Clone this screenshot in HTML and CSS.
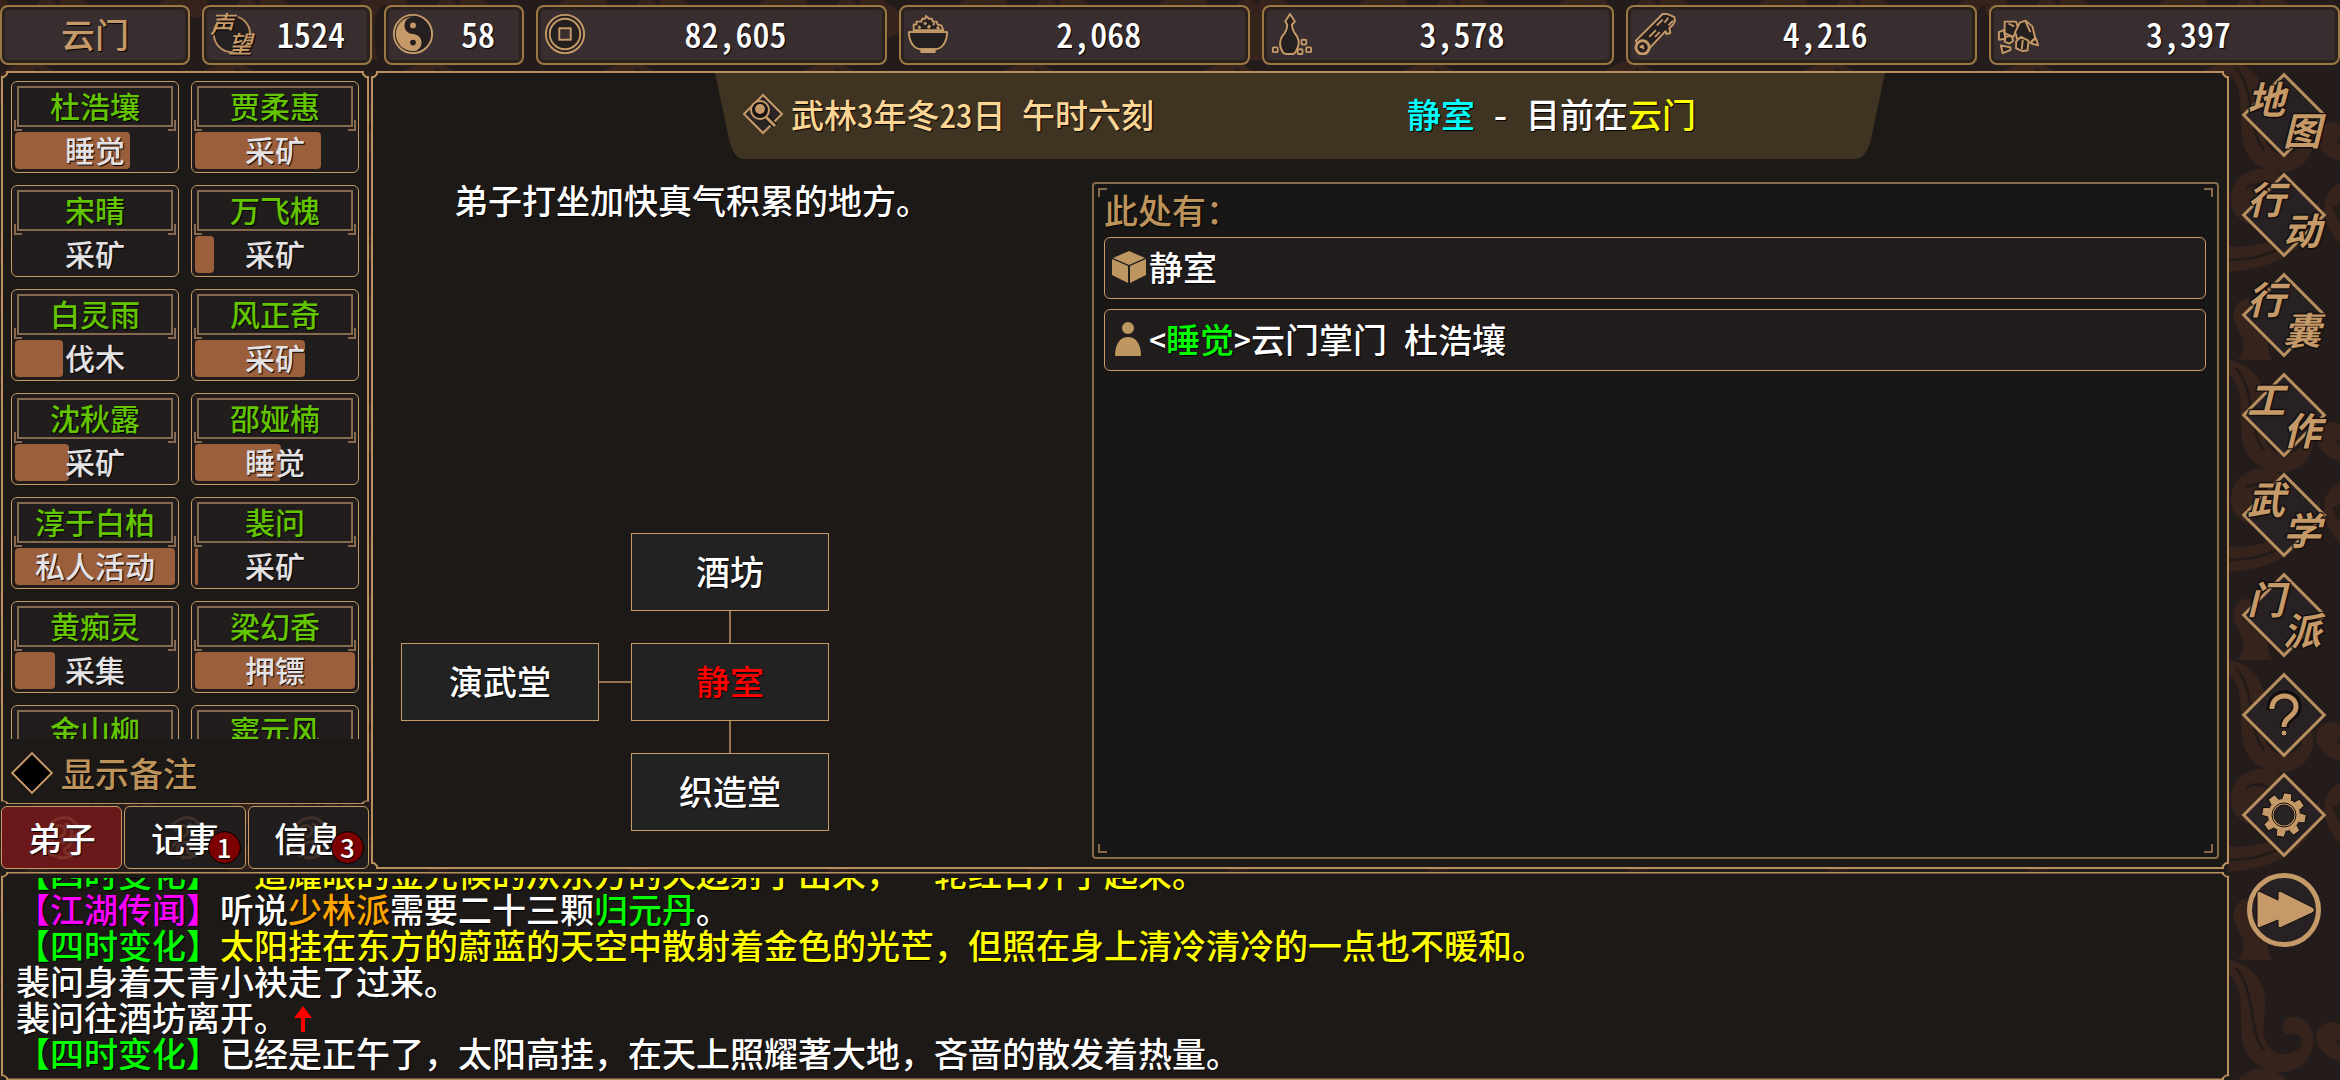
FILE: index.html
```
<!DOCTYPE html>
<html lang="zh-CN">
<head>
    <meta charset="UTF-8">
    <meta name="viewport" content="width=device-width, initial-scale=1.0">
    <title>云门</title>
    <link rel="stylesheet" href="styles.css">
</head>
<body>
    <svg class="backdrop" aria-hidden="true">
        <defs>
            <pattern id="clouds" width="200" height="300" patternUnits="userSpaceOnUse" patternTransform="translate(28 60)">
                <g fill="#35231c">
                    <path d="M0 0C28 4 42 28 36 58C32 84 44 100 66 92C78 88 76 72 64 74C54 76 50 64 60 58C78 52 92 74 82 94C70 122 20 118 14 78C12 50 16 24 0 14Z"/>
                    <path d="M20 112C36 104 58 112 62 128C78 132 84 150 70 162C52 176 18 170 6 152C-2 138 6 118 20 112Z"/>
                    <path d="M0 186C34 190 66 176 92 140C92 178 60 208 0 212Z"/>
                    <path d="M100 96C84 86 84 64 104 62C118 62 120 80 108 80C112 90 128 82 134 62C150 20 176 10 200 0V30C176 36 160 50 152 74C144 102 118 108 100 96Z"/>
                    <path d="M104 128C118 116 138 128 130 144C124 154 110 148 114 140C104 146 108 162 124 170C150 184 180 176 200 160V196C164 212 118 200 102 170C94 154 94 138 104 128Z"/>
                    <path d="M6 262C2 240 22 232 30 246C44 216 46 232 60 244C78 252 80 274 60 278C44 280 42 262 54 260C42 254 34 280 44 300H10C20 286 14 274 6 262Z"/>
                    <path d="M120 300C116 260 130 232 160 228C182 228 186 254 168 258C156 258 154 246 162 244C142 244 144 276 150 300Z"/>
                </g>
                <g fill="none" stroke="#241b19" stroke-width="3">
                    <path d="M8 8C28 30 20 72 36 90"/>
                    <path d="M0 200C34 200 60 188 78 168"/>
                    <path d="M18 128Q34 118 48 136Q64 138 66 150"/>
                    <path d="M196 14C160 26 146 50 140 74"/>
                    <path d="M106 146C112 176 150 194 196 178"/>
                </g>
            </pattern>
        </defs>
        <rect width="100%" height="100%" fill="url(#clouds)"/>
    </svg>

    <header class="topbar">
        <button class="stat stat-sect">云门</button>
        <div class="stat stat-fame">
            <span class="stat-icon fame-icon">
                <svg class="fame-ring" viewBox="0 0 44 44"><circle cx="23" cy="22" r="19" fill="#251f20" stroke="#b98f5e" stroke-width="2"/></svg>
                <span>声</span><span>望</span>
            </span>
            <span class="number">1524</span>
        </div>
        <div class="stat stat-qi">
            <svg class="stat-icon" viewBox="0 0 44 44">
                <circle cx="22" cy="22" r="20" fill="#251f20" stroke="#c69a68" stroke-width="2"/>
                <path d="M22 4A18 18 0 0 0 22 40A9 9 0 0 0 22 22A9 9 0 0 1 22 4Z" fill="#c69a68"/>
                <circle cx="22" cy="13" r="3" fill="#c69a68"/>
                <circle cx="22" cy="31" r="3" fill="#251f20"/>
            </svg>
            <span class="number">58</span>
        </div>
        <div class="stat">
            <svg class="stat-icon" viewBox="0 0 44 44" fill="none" stroke="#c69a68" stroke-width="2">
                <circle cx="22" cy="22" r="20" fill="#251f20"/>
                <circle cx="22" cy="22" r="16"/>
                <rect x="16" y="16" width="12" height="12" fill="#382d2f"/>
            </svg>
            <span class="number">82,605</span>
        </div>
        <div class="stat">
            <svg class="stat-icon" viewBox="0 0 44 44" fill="#251f20" stroke="#c69a68" stroke-width="2" stroke-linejoin="round">
                <path d="M7 18V12L10 12L10 9L15 9L16 6L19 6L20 3L23 6L26 6L27 9L31 9L32 12L36 13L38 18Z"/>
                <path d="M12 16L14 14M18 10L20 12M22 16L24 13M27 11L29 12M31 16L34 15" stroke-width="3"/>
                <path d="M2 20H42C42 30 37 38 29 38H15C7 38 2 30 2 20Z"/>
                <path d="M2 20H42M15 38H29V41H15Z" fill="#c69a68"/>
            </svg>
            <span class="number">2,068</span>
        </div>
        <div class="stat">
            <svg class="stat-icon" viewBox="0 0 44 44" fill="#251f20" stroke="#c69a68" stroke-width="2" stroke-linejoin="round">
                <path d="M21 1L26 9L23 12C23 18 25 20 28 24C32 30 30 36 26 42L24 43H17L14 42C10 36 9 30 13 24C17 20 18 17 18 12L16 9Z"/>
                <rect x="3" y="36" width="5" height="5" rx="1"/>
                <rect x="33" y="28" width="5" height="5" rx="1"/>
                <rect x="29" y="38" width="5" height="5" rx="1"/>
                <rect x="38" y="36" width="5" height="5" rx="1"/>
            </svg>
            <span class="number">3,578</span>
        </div>
        <div class="stat">
            <svg class="stat-icon" viewBox="0 0 44 44" fill="#251f20" stroke="#c69a68" stroke-width="2" stroke-linejoin="round">
                <path d="M2 29L30 1L34 1L37 2L42 4L43 8L41 12L37 16L38 21L34 22L33 19L17 36L10 43Z"/>
                <path d="M36 5L32 10M41 8L36 13M23 18L16 25M27 20L22 25M30 7L24 13"/>
                <circle cx="9" cy="36" r="7" stroke-width="3"/>
                <path d="M6 36L9 34L10 38"/>
            </svg>
            <span class="number">4,216</span>
        </div>
        <div class="stat">
            <svg class="stat-icon" viewBox="0 0 44 44" fill="#251f20" stroke="#c69a68" stroke-width="2" stroke-linejoin="round">
                <path d="M8 9L20 9L22 15L17 25L8 21Z"/>
                <path d="M19 20L24 10L30 8L37 14L40 26L35 31L22 30Z"/>
                <path d="M2 20L7 18L9 27L2 28Z"/>
                <path d="M9 25L15 24L17 29L13 32L8 30Z"/>
                <path d="M20 30L25 25L33 29L32 39L27 40L20 37Z"/>
                <path d="M37 29L41 27L43 34L36 32Z"/>
                <path d="M4 34L14 36L14 39L6 42Z"/>
                <path d="M30 9L35 20M27 28L26 38M12 11L18 14" fill="none"/>
            </svg>
            <span class="number">3,397</span>
        </div>
    </header>

    <div class="content">
        <div class="stage">
            <div class="upper">
                <aside class="sidebar">
                    <section class="frame roster">
                        <div class="disciples">
                            <button class="card"><span class="name">杜浩壤</span><span class="status"><i class="bar" style="width: 72%"></i><b>睡觉</b></span></button>
                            <button class="card"><span class="name">贾柔惠</span><span class="status"><i class="bar" style="width: 79%"></i><b>采矿</b></span></button>
                            <button class="card"><span class="name">宋晴</span><span class="status"><b>采矿</b></span></button>
                            <button class="card"><span class="name">万飞槐</span><span class="status"><i class="bar" style="width: 12%"></i><b>采矿</b></span></button>
                            <button class="card"><span class="name">白灵雨</span><span class="status"><i class="bar" style="width: 30%"></i><b>伐木</b></span></button>
                            <button class="card"><span class="name">风正奇</span><span class="status"><i class="bar" style="width: 69%"></i><b>采矿</b></span></button>
                            <button class="card"><span class="name">沈秋露</span><span class="status"><i class="bar" style="width: 34%"></i><b>采矿</b></span></button>
                            <button class="card"><span class="name">邵娅楠</span><span class="status"><i class="bar" style="width: 54%"></i><b>睡觉</b></span></button>
                            <button class="card"><span class="name">淳于白柏</span><span class="status"><i class="bar" style="width: 100%"></i><b>私人活动</b></span></button>
                            <button class="card"><span class="name">裴问</span><span class="status"><i class="bar" style="width: 2%"></i><b>采矿</b></span></button>
                            <button class="card"><span class="name">黄痴灵</span><span class="status"><i class="bar" style="width: 25%"></i><b>采集</b></span></button>
                            <button class="card"><span class="name">梁幻香</span><span class="status"><i class="bar" style="width: 100%"></i><b>押镖</b></span></button>
                            <button class="card"><span class="name">金山柳</span><span class="status"></span></button>
                            <button class="card"><span class="name">窦元风</span><span class="status"></span></button>
                        </div>
                        <label class="note-toggle" for="showNotes">
                            <input type="checkbox" id="showNotes">
                            显示备注
                        </label>
                    </section>
                    <nav class="tabs">
                        <button class="tab active"><svg class="emblem" viewBox="0 0 44 44"><use href="#emblem"/></svg><span>弟子</span></button>
                        <button class="tab"><svg class="emblem" viewBox="0 0 44 44"><use href="#emblem"/></svg><span>记事</span><span class="badge">1</span></button>
                        <button class="tab"><svg class="emblem" viewBox="0 0 44 44"><use href="#emblem"/></svg><span>信息</span><span class="badge">3</span></button>
                    </nav>
                </aside>

                <main class="frame scene">
                    <div class="ribbon">
                        <svg class="ribbon-shape" viewBox="0 0 1170 86" preserveAspectRatio="none"><path d="M0 0H1170L1156 66Q1151 86 1140 86H28Q19 86 14 66Z" fill="#3f3322"/></svg>
                        <div class="date">
                            <svg class="lens" viewBox="0 0 42 42" fill="none" stroke="#c69a68" stroke-width="2">
                                <path d="M21 2L40 21L21 40L2 21Z" fill="#2a2425"/>
                                <path d="M23 23L33 33" stroke="#181414" stroke-width="6"/>
                                <path d="M24 24L33 33" stroke-width="3"/>
                                <circle cx="18" cy="17" r="9" fill="#181414"/>
                                <circle cx="18" cy="16" r="4" fill="#c69a68"/>
                            </svg>
                            <span class="number">武林3年冬23日 午时六刻</span>
                        </div>
                        <div class="place number"><span class="cyan">静室</span> - 目前在<span class="yellow">云门</span></div>
                    </div>

                    <div class="scene-body">
                        <div class="room">
                            <p class="description">弟子打坐加快真气积累的地方。</p>
                            <div class="map">
                                <button class="node north">酒坊</button>
                                <i class="link-v link-top"></i>
                                <button class="node west">演武堂</button>
                                <i class="link-h"></i>
                                <button class="node here">静室</button>
                                <i class="link-v link-bottom"></i>
                                <button class="node south">织造堂</button>
                            </div>
                        </div>

                        <section class="present">
                            <i class="corner tl"></i><i class="corner tr"></i><i class="corner bl"></i><i class="corner br"></i>
                            <h2>此处有：</h2>
                            <button class="entry">
                                <svg class="entry-icon" viewBox="0 0 34 34" fill="#bd975f"><path d="M17 1L33 8L17 15L1 8Z"/><path d="M0 9L16 16V33L0 25Z"/><path d="M34 9L18 16V33L34 25Z"/></svg>
                                <span>静室</span>
                            </button>
                            <button class="entry">
                                <svg class="entry-icon" viewBox="0 0 34 34" fill="#bd975f"><circle cx="16" cy="6" r="6"/><path d="M3 34C3 22 8 15 16 15S29 22 29 34Z"/></svg>
                                <span class="number">&lt;<span class="green">睡觉</span>&gt;云门掌门 杜浩壤</span>
                            </button>
                        </section>
                    </div>
                </main>
            </div>

            <section class="frame log">
                <div class="log-lines">
                    <p class="yellow"><span class="green">【四时变化】</span>一道耀眼的金光倏的从东方的天边射了出来，一轮红日升了起来。</p>
                    <p><span class="magenta">【江湖传闻】</span>听说<span class="orange">少林派</span>需要二十三颗<span class="green">归元丹</span>。</p>
                    <p class="yellow"><span class="green">【四时变化】</span>太阳挂在东方的蔚蓝的天空中散射着金色的光芒，但照在身上清冷清冷的一点也不暖和。</p>
                    <p>裴问身着天青小袂走了过来。</p>
                    <p>裴问往酒坊离开。<svg class="arrow" viewBox="0 0 30 30"><path d="M15 2L24 14H17V28H13V14H6Z" fill="#f00"/></svg></p>
                    <p><span class="green">【四时变化】</span>已经是正午了，太阳高挂，在天上照耀著大地，吝啬的散发着热量。</p>
                </div>
            </section>
        </div>

        <nav class="menu">
            <button class="menu-item"><span>地</span><span>图</span></button>
            <button class="menu-item"><span>行</span><span>动</span></button>
            <button class="menu-item"><span>行</span><span>囊</span></button>
            <button class="menu-item"><span>工</span><span>作</span></button>
            <button class="menu-item"><span>武</span><span>学</span></button>
            <button class="menu-item"><span>门</span><span>派</span></button>
            <button class="menu-item icon-only" aria-label="帮助">
                <svg viewBox="0 0 84 84" fill="none" stroke-linecap="butt">
                    <path d="M29 37C29 17 55 17 55 34C55 45 42 43 42 55" stroke="#110d0c" stroke-width="9"/>
                    <path d="M30 36C30 19 54 19 54 34C54 44 42 43 42 54" stroke="#c69a68" stroke-width="5"/>
                    <circle cx="42" cy="60" r="3" fill="#c69a68" stroke="#110d0c"/>
                </svg>
            </button>
            <button class="menu-item icon-only" aria-label="设置">
                <svg viewBox="0 0 84 84">
                    <g fill="#c69a68" stroke="#110d0c" stroke-width="1" transform="rotate(10 42 42)">
                        <path d="M37 27L38 20H46L47 27Z"/>
                        <path d="M37 27L38 20H46L47 27Z" transform="rotate(45 42 42)"/>
                        <path d="M37 27L38 20H46L47 27Z" transform="rotate(90 42 42)"/>
                        <path d="M37 27L38 20H46L47 27Z" transform="rotate(135 42 42)"/>
                        <path d="M37 27L38 20H46L47 27Z" transform="rotate(180 42 42)"/>
                        <path d="M37 27L38 20H46L47 27Z" transform="rotate(225 42 42)"/>
                        <path d="M37 27L38 20H46L47 27Z" transform="rotate(270 42 42)"/>
                        <path d="M37 27L38 20H46L47 27Z" transform="rotate(315 42 42)"/>
                    </g>
                    <circle cx="42" cy="42" r="16" fill="#c69a68"/>
                    <circle cx="42" cy="42" r="12" fill="#c69a68" stroke="#110d0c"/>
                    <circle cx="42" cy="42" r="10" fill="#282223" stroke="#110d0c"/>
                </svg>
            </button>
            <button class="speed" aria-label="快进">
                <svg viewBox="8 5 64 64"><path d="M13 21Q13 17 17 19L34 27V21Q34 17 38 19L68 34Q73 37 68 40L38 54Q34 56 34 52V47L17 54Q13 56 13 52Z" fill="#c69a68" stroke="#110d0c"/></svg>
            </button>
        </nav>
    </div>

    <svg class="symbols" aria-hidden="true">
        <symbol id="emblem" viewBox="0 0 44 44">
            <g fill="none" stroke="currentColor" stroke-width="3" stroke-linecap="round">
                <path d="M10 8C18 0 30 0 34 6C40 10 44 20 40 28C38 38 28 44 18 41"/>
                <path d="M12 14C18 6 28 10 24 18C20 24 14 18 18 15"/>
                <path d="M26 8C36 12 32 26 24 26C18 26 10 30 16 38"/>
                <path d="M4 22C4 32 8 38 14 40M8 24C10 18 16 26 10 30"/>
                <path d="M38 18C32 20 32 30 26 32C22 34 26 40 30 37"/>
            </g>
        </symbol>
    </svg>
</body>
</html>
```
FILE: styles.css
```
*,
*::before,
*::after {
    box-sizing: border-box;
}

body {
    display: flex;
    flex-direction: column;
    gap: 6px;
    height: 100vh;
    margin: 0;
    padding-top: 5px;
    overflow: hidden;
    background-color: #231c1b;
    color: #fff;
    font-family: "Noto Sans CJK SC", sans-serif;
    font-size: 34px;
    font-weight: 500;
    line-height: 36px;
    text-spacing-trim: space-all;
    text-shadow: 1px 1px 1px #000;
}

button {
    margin: 0;
    padding: 0;
    border: none;
    background: none;
    color: inherit;
    font: inherit;
    text-shadow: inherit;
    cursor: pointer;
}

p, h2 {
    margin: 0;
    font-size: inherit;
    font-weight: inherit;
}

svg {
    display: block;
}

.backdrop {
    position: absolute;
    z-index: -1;
    top: 0;
    left: 0;
    width: 100%;
    height: 100%;
}

.symbols {
    position: absolute;
    width: 0;
    height: 0;
}

/* half-width digits and punctuation */
.number {
    font-feature-settings: "hwid";
}

.cyan { color: #0ff; }
.yellow { color: #ff0; }
.green { color: #0f0; }
.magenta { color: #f0f; }
.orange { color: #ffa500; }

/* panel with notched corners */
.frame {
    border: 8px solid transparent;
    border-image: url("data:image/svg+xml,%3Csvg xmlns='http://www.w3.org/2000/svg' width='24' height='24'%3E%3Cpath d='M6 1H18V3L21 6H23V18H21L18 21V23H6V21L3 18H1V6H3L6 3Z' fill='%231d1917' stroke='%23b8905f' stroke-width='2'/%3E%3C/svg%3E") 8 fill stretch;
}

/* Top bar */
.topbar {
    display: flex;
    flex: none;
    gap: 12px;
    height: 60px;
}

.stat {
    display: flex;
    flex: 1;
    align-items: center;
    padding: 0 0 2px 6px;
    border: 2px solid #9c7843;
    border-radius: 8px;
    background-color: #382d2f;
    box-shadow: inset 0 0 0 3px #2b211d;
}

.stat .number {
    flex: 1;
    text-align: center;
}

.stat-sect {
    flex: 0 0 190px;
    justify-content: center;
    padding: 0 0 2px;
    color: #c69a68;
}

.stat-fame {
    flex: 0 0 170px;
}

.stat-qi {
    flex: 0 0 140px;
}

.stat-icon {
    flex: none;
    width: 42px;
    height: 42px;
}

.fame-icon {
    position: relative;
    display: grid;
    grid-template-columns: 18px 24px;
    grid-template-rows: 20px 22px;
    color: #c69a68;
    font-size: 24px;
    font-style: italic;
    line-height: 20px;
}

.fame-icon span {
    position: relative;
}

.fame-icon span:last-child {
    grid-row: 2;
    grid-column: 2;
}

.fame-ring {
    position: absolute;
    inset: 0;
}

/* Layout */
.content {
    display: flex;
    flex: 1;
    min-height: 0;
}

.stage {
    display: flex;
    flex: 1;
    flex-direction: column;
    gap: 3px;
    min-width: 0;
    padding-left: 1px;
}

.upper {
    display: flex;
    flex: 1;
    gap: 2px;
    min-height: 0;
}

.sidebar {
    display: flex;
    flex: 0 0 368px;
    flex-direction: column;
    gap: 2px;
}

/* Disciple list */
.roster {
    display: flex;
    flex: 1;
    flex-direction: column;
    min-height: 0;
    border-bottom-width: 4px;
}

.disciples {
    display: grid;
    flex: 1;
    grid-template-columns: 1fr 1fr;
    grid-auto-rows: 92px;
    gap: 12px;
    min-height: 0;
    padding: 2px 2px 0;
    overflow: hidden;
    font-size: 30px;
}

.card {
    display: flex;
    flex-direction: column;
    gap: 5px;
    padding: 4px 3px 3px;
    border: 1px solid #c49b66;
    border-radius: 6px;
    background-color: #211d1d;
}

.name {
    position: relative;
    align-self: stretch;
    height: 41px;
    margin: 0 2px;
    border: 2px solid #86694f;
    color: #63c400;
    line-height: 34px;
}

.name::before,
.name::after {
    content: "";
    position: absolute;
    bottom: -6px;
    width: 8px;
    height: 11px;
    border: 2px solid #86694f;
    border-top: none;
}

.name::before {
    left: -5px;
    border-right: none;
}

.name::after {
    right: -5px;
    border-left: none;
}

.status {
    position: relative;
    align-self: stretch;
    flex: 1;
    color: #e4e2e4;
    line-height: 35px;
}

.status b {
    position: relative;
    font-weight: 500;
}

.bar {
    position: absolute;
    top: 0;
    bottom: 0;
    left: 0;
    border-radius: 4px;
    background-color: #9b5f3c;
}

.note-toggle {
    display: flex;
    flex: none;
    align-items: center;
    gap: 14px;
    height: 61px;
    padding: 6px 0 0 8px;
    color: #bd935c;
}

.note-toggle input {
    width: 30px;
    height: 30px;
    margin: 0;
    border: 2px solid #c69a68;
    background-color: #000;
    appearance: none;
    transform: rotate(45deg);
}

.note-toggle input:checked {
    background-color: #9b5f3c;
}

.tabs {
    display: flex;
    gap: 2px;
    height: 63px;
}

.tab {
    position: relative;
    flex: 1;
    border: 1px solid #c49b66;
    border-radius: 6px;
    background-color: #211d1d;
}

.tab.active {
    background-color: #6a1819;
}

.tab span {
    position: relative;
}

.emblem {
    position: absolute;
    top: 9px;
    left: 38px;
    width: 44px;
    height: 44px;
    color: #3f3029;
}

.active .emblem {
    color: #7c3027;
}

.tab .badge {
    position: absolute;
    right: 4px;
    bottom: 4px;
    width: 33px;
    height: 33px;
    border: 1px solid #000;
    border-radius: 50%;
    background-color: #7c0000;
    font-size: 26px;
    line-height: 30px;
}

/* Scene */
.scene {
    display: flex;
    flex: 1;
    flex-direction: column;
    gap: 23px;
    min-width: 0;
}

.ribbon {
    position: relative;
    display: flex;
    align-items: center;
    align-self: center;
    flex: none;
    width: 1170px;
    height: 80px;
    padding: 0 0 10px 27px;
}

.ribbon-shape {
    position: absolute;
    top: -6px;
    left: 0;
    width: 100%;
    height: 86px;
}

.date {
    position: relative;
    display: flex;
    align-items: center;
    gap: 7px;
    width: 665px;
    color: #fcd694;
    font-size: 33px;
}

.lens {
    width: 42px;
    height: 42px;
}

.place {
    position: relative;
}

.scene-body {
    display: flex;
    flex: 1;
    justify-content: space-between;
    gap: 20px;
    min-height: 0;
    padding: 0 2px 2px 0;
}

.room {
    display: flex;
    flex: 1;
    flex-direction: column;
    justify-content: space-between;
    padding: 0 0 28px 22px;
}

.description {
    padding-left: 53px;
}

/* Room map */
.map {
    display: grid;
    grid-template-columns: 198px 32px 198px;
    grid-template-rows: 78px 32px 78px 32px 78px;
}

.node {
    padding-bottom: 2px;
    border: 1px solid #c49b66;
    background-color: #222;
}

.north,
.link-v,
.here,
.south {
    grid-column: 3;
}

.north { grid-row: 1; }
.link-top { grid-row: 2; }
.west,
.link-h,
.here { grid-row: 3; }
.link-bottom { grid-row: 4; }
.south { grid-row: 5; }
.west { grid-column: 1; }
.link-h { grid-column: 2; }

.here {
    color: #f00;
}

.link-v {
    justify-self: center;
    width: 2px;
    background-color: #957450;
}

.link-h {
    align-self: center;
    height: 2px;
    background-color: #957450;
}

/* Things in the room */
.present {
    position: relative;
    display: flex;
    flex: 0 0 1127px;
    flex-direction: column;
    gap: 10px;
    padding: 9px 11px 8px 10px;
    border: 2px solid #876a4b;
    border-radius: 4px;
    background-color: #191715;
}

.present h2 {
    color: #bd935c;
    line-height: 34px;
}

.entry {
    display: flex;
    align-items: center;
    gap: 3px;
    height: 62px;
    padding: 0 0 2px 7px;
    border: 1px solid #c49b66;
    border-radius: 6px;
    background-color: #211d1d;
}

.entry-icon {
    width: 34px;
    height: 34px;
}

.corner {
    position: absolute;
    width: 9px;
    height: 9px;
    border: 0 solid #876a4b;
}

.tl { top: 4px; left: 4px; border-width: 2px 0 0 2px; }
.tr { top: 4px; right: 4px; border-width: 2px 2px 0 0; }
.bl { bottom: 4px; left: 4px; border-width: 0 0 2px 2px; }
.br { right: 4px; bottom: 4px; border-width: 0 2px 2px 0; }

/* Message log */
.log {
    display: flex;
    flex: 0 0 208px;
    min-height: 0;
    border-width: 6px 8px;
}

.log-lines {
    display: flex;
    flex: 1;
    flex-direction: column;
    justify-content: flex-end;
    min-width: 0;
    padding: 0 0 3px 7px;
    overflow: hidden;
    white-space: nowrap;
}

.log-lines p {
    flex: none;
    height: 36px;
}

.arrow {
    display: inline-block;
    width: 30px;
    height: 30px;
    vertical-align: -3px;
}

/* Right menu */
.menu {
    display: flex;
    flex: 0 0 111px;
    flex-direction: column;
    align-items: center;
    gap: 16px;
    padding: 2px 1px 0 0;
}

.menu-item {
    position: relative;
    display: grid;
    grid-template-columns: 36px 36px;
    grid-template-rows: 31px 31px;
    place-content: center;
    place-items: center;
    width: 84px;
    height: 84px;
    padding-bottom: 4px;
    color: #c69a68;
    font-size: 38px;
    font-style: italic;
    font-weight: 700;
    line-height: 31px;
    text-shadow: 1px 1px 1px #110d0c, -1px -1px 1px #110d0c, 1px -1px 1px #110d0c, -1px 1px 1px #110d0c;
}

.menu-item::before {
    content: "";
    position: absolute;
    top: 12px;
    left: 12px;
    width: 60px;
    height: 60px;
    border: 3px solid #b8905f;
    background-color: #272123;
    transform: rotate(45deg);
}

.menu-item span {
    position: relative;
}

.menu-item span:nth-child(2) {
    grid-row: 2;
    grid-column: 2;
}

.menu-item.icon-only {
    display: block;
    padding: 0;
}

.icon-only svg {
    position: relative;
}

.speed {
    width: 74px;
    height: 74px;
    border: 5px solid #c69a68;
    border-radius: 50%;
    background-color: #272123;
}
```
